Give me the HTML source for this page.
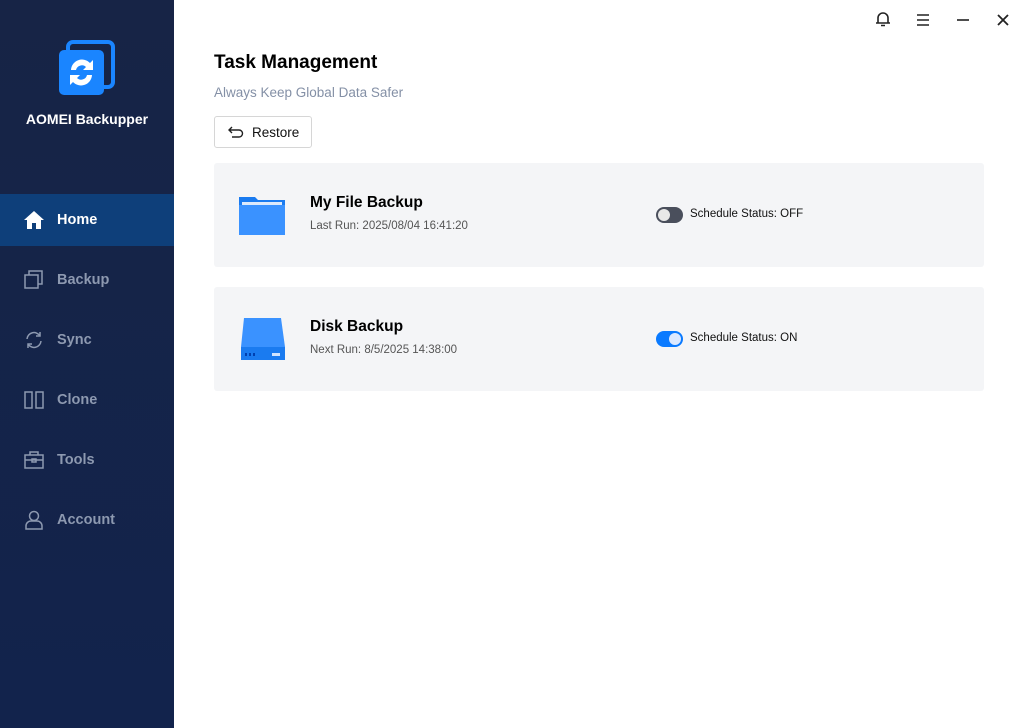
<!DOCTYPE html>
<html><head><meta charset="utf-8"><style>
*{margin:0;padding:0;box-sizing:border-box}
body{width:1023px;height:728px;overflow:hidden;background:#fff;font-family:"Liberation Sans","DejaVu Sans",sans-serif;position:relative}
.side{position:absolute;left:0;top:0;width:174px;height:728px;background:linear-gradient(#172446,#12234c)}
.brand{position:absolute;top:111px;left:0;width:174px;text-align:center;color:#fff;font-weight:bold;font-size:14px}
.nav{position:absolute;left:0;width:174px;height:52px;color:#8d99b0;font-size:14.5px;font-weight:bold}
.nav span{position:absolute;left:57px;top:18px}
.nav svg{position:absolute;left:24px;top:16px}
.nav.act{background:#0e3f7a;color:#fff}
.t{position:absolute;color:#000}
.card{position:absolute;left:214px;width:770px;height:104px;background:#f4f5f7;border-radius:3px}
.card h3{position:absolute;left:96px;top:31px;font-size:15.5px;font-weight:bold}
.card p{position:absolute;left:96px;top:57px;font-size:11.5px;color:#555}
.tog{position:absolute;left:442px;top:44px;width:27px;height:16px;border-radius:8px}
.tog i{position:absolute;top:2px;width:12px;height:12px;border-radius:6px;background:#e8e8e8}
.st{position:absolute;left:476px;top:45px;font-size:11.5px;color:#111}
</style></head><body>
<div class="side">
<svg style="position:absolute;left:58px;top:40px" width="58" height="58" viewBox="0 0 58 58">
<rect x="10" y="2" width="45" height="45" rx="5" fill="none" stroke="#1a85ff" stroke-width="4"/>
<rect x="1" y="10" width="45" height="45" rx="5" fill="#1a85ff"/>
<path d="M13 30a11 11 0 0 1 19-7l3-3v10h-10l3-3a6 6 0 0 0-10 3z" fill="#fff"/>
<path d="M34 35a11 11 0 0 1-19 7l-3 3V35h10l-3 3a6 6 0 0 0 10-3z" fill="#fff"/>
</svg>
<div class="brand">AOMEI Backupper</div>
<div class="nav act" style="top:194px"><svg width="20" height="20" viewBox="0 0 20 20"><path d="M10 1L0 10h3v9h5v-6h4v6h5v-9h3z" fill="#fff"/></svg><span>Home</span></div>
<div class="nav" style="top:254px"><svg width="20" height="20" viewBox="0 0 20 20" fill="none" stroke="#8d99b0" stroke-width="1.5"><rect x="1" y="5" width="13" height="13"/><path d="M5 5V1h13v13h-4"/></svg><span>Backup</span></div>
<div class="nav" style="top:314px"><svg width="20" height="20" viewBox="0 0 20 20" fill="none" stroke="#8d99b0" stroke-width="1.5"><path d="M3 9a7 7 0 0 1 13-3M17 11a7 7 0 0 1-13 3"/><path d="M16 2v4h-4M4 18v-4h4"/></svg><span>Sync</span></div>
<div class="nav" style="top:374px"><svg width="20" height="20" viewBox="0 0 20 20" fill="none" stroke="#8d99b0" stroke-width="1.5"><rect x="1" y="2" width="7" height="16"/><rect x="12" y="2" width="7" height="16"/></svg><span>Clone</span></div>
<div class="nav" style="top:434px"><svg width="20" height="20" viewBox="0 0 20 20" fill="none" stroke="#8d99b0" stroke-width="1.5"><rect x="1" y="5" width="18" height="13"/><path d="M6 5V2h8v3M1 10h18"/><rect x="8" y="9" width="4" height="3"/></svg><span>Tools</span></div>
<div class="nav" style="top:494px"><svg width="20" height="20" viewBox="0 0 20 20" fill="none" stroke="#8d99b0" stroke-width="1.5"><circle cx="10" cy="6" r="4.5"/><path d="M2 19v-3a5 5 0 0 1 5-5h6a5 5 0 0 1 5 5v3z"/></svg><span>Account</span></div>
</div>
<svg style="position:absolute;left:875px;top:11px" width="16" height="16" viewBox="0 0 16 16" fill="none" stroke="#222" stroke-width="1.6"><path d="M3 12V7a5 5 0 0 1 10 0v5zM1 12h14M6 14.5h4"/></svg>
<svg style="position:absolute;left:915px;top:12px" width="16" height="16" viewBox="0 0 16 16" stroke="#222" stroke-width="1.6"><path d="M2 3h12M2 8h12M2 13h12"/></svg>
<svg style="position:absolute;left:955px;top:12px" width="16" height="16" viewBox="0 0 16 16" stroke="#222" stroke-width="1.6"><path d="M2 8h12"/></svg>
<svg style="position:absolute;left:995px;top:12px" width="16" height="16" viewBox="0 0 16 16" stroke="#222" stroke-width="1.8"><path d="M3 3l10 10M13 3L3 13"/></svg>
<div class="t" style="left:214px;top:52px;font-size:19px;font-weight:bold">Task Management</div>
<div class="t" style="left:214px;top:85px;font-size:13.5px;color:#8490a6">Always Keep Global Data Safer</div>
<div style="position:absolute;left:214px;top:116px;width:98px;height:32px;border:1px solid #d6d6d6;border-radius:3px;font-size:13.5px;color:#111">
<svg style="position:absolute;left:13px;top:9px" width="16" height="12" viewBox="0 0 16 12" fill="none" stroke="#222" stroke-width="1.4"><path d="M4 1L1 4l3 3M1 4h10a3.5 3.5 0 0 1 0 7H4"/></svg>
<span style="position:absolute;left:37px;top:8px">Restore</span></div>
<div class="card" style="top:163px">
<svg style="position:absolute;left:25px;top:32px" width="46" height="40" viewBox="0 0 46 40"><path d="M0 2h16l3 3h27v35H0z" fill="#1a7bf0"/><rect x="3" y="7" width="40" height="3" fill="#dce9fb"/><rect x="0" y="10" width="46" height="30" fill="#3a92ff"/></svg>
<h3>My File Backup</h3><p>Last Run: 2025/08/04 16:41:20</p>
<div class="tog" style="background:#4a4f5c"><i style="left:2px"></i></div><div class="st">Schedule Status: OFF</div></div>
<div class="card" style="top:287px">
<svg style="position:absolute;left:26px;top:30px" width="46" height="44" viewBox="0 0 46 44"><path d="M4 1h37l4 29H1z" fill="#3a92ff"/><rect x="1" y="30" width="44" height="13" fill="#1a7bf0"/><rect x="5" y="36" width="2" height="3" fill="#0040b0"/><rect x="9" y="36" width="2" height="3" fill="#0040b0"/><rect x="13" y="36" width="2" height="3" fill="#0040b0"/><rect x="32" y="36" width="8" height="3" fill="#cfe3ff"/></svg>
<h3>Disk Backup</h3><p>Next Run: 8/5/2025 14:38:00</p>
<div class="tog" style="background:#0a7aff"><i style="left:13px;background:#dce9ff"></i></div><div class="st">Schedule Status: ON</div></div>
</body></html>
